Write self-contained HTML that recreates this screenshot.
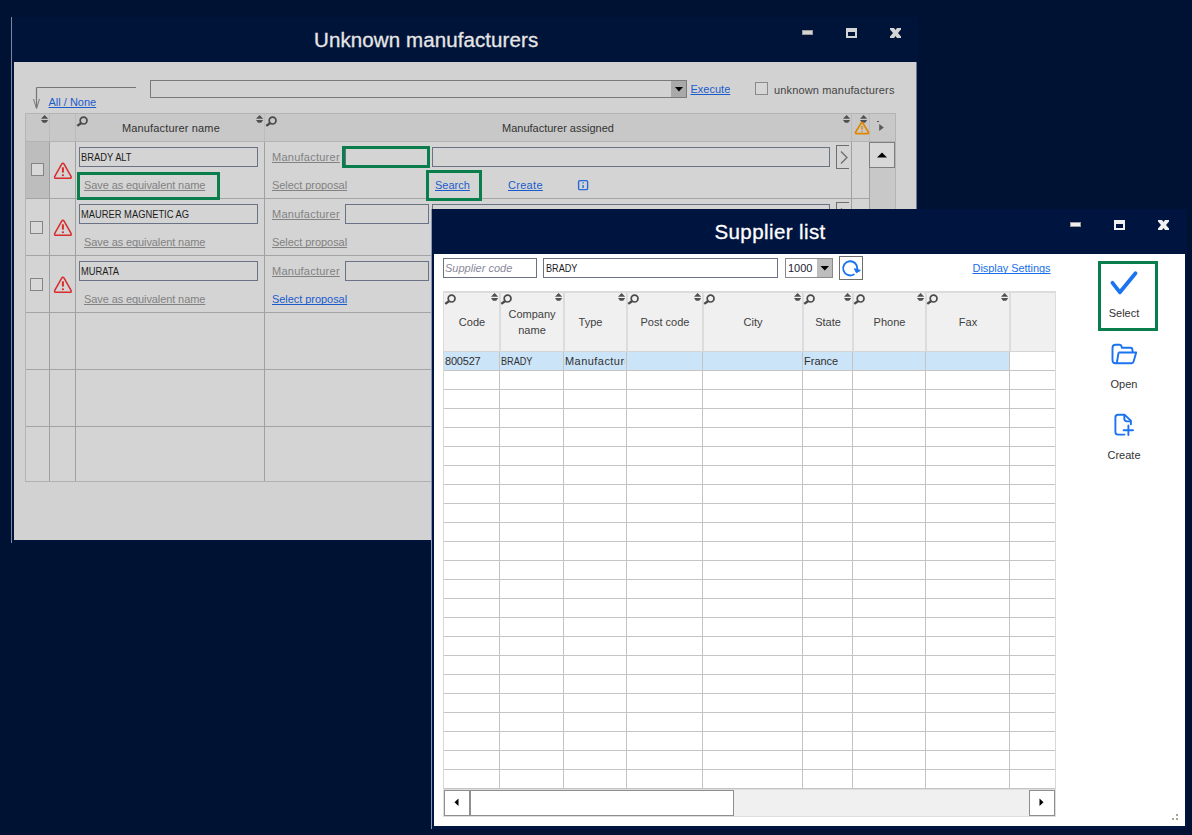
<!DOCTYPE html>
<html><head><meta charset="utf-8"><title>Unknown manufacturers</title>
<style>
html,body{margin:0;padding:0;}
body{width:1192px;height:835px;overflow:hidden;position:relative;background:#001234;font-family:"Liberation Sans", sans-serif;}
svg{overflow:visible}
div{text-decoration-skip-ink:none}
</style></head><body>
<div style="position:absolute;left:12px;top:17px;width:906px;height:525px;background:#001439"></div>
<div style="position:absolute;left:11px;top:17px;width:1px;height:526px;background:#7c88a4"></div>
<div style="position:absolute;left:314px;top:27.40px;font-size:20.5px;line-height:25px;color:#e6e6e6;white-space:pre;letter-spacing:0.1px;-webkit-text-stroke:0.3px #e6e6e6">Unknown manufacturers</div>
<div style="position:absolute;left:802px;top:30px;width:11px;height:5px;background:#d4d4d4;box-shadow:inset 0 0 0 1px #9a9a9a"></div>
<div style="position:absolute;left:846px;top:28px;width:11px;height:10px;box-sizing:border-box;border:2px solid #d4d4d4;border-top-width:4px"></div>
<svg style="position:absolute;left:890px;top:28px" width="11" height="10" viewBox="0 0 11 10"><path d="M0 0 H4 L5.5 2 L7 0 H11 V1.5 L8 5 L11 8.5 V10 H7 L5.5 8 L4 10 H0 V8.5 L3 5 L0 1.5 Z" fill="#d4d4d4"/></svg>
<div style="position:absolute;left:14px;top:62px;width:902px;height:478px;background:#d2d2d2"></div>
<div style="position:absolute;left:916px;top:62px;width:1px;height:478px;background:#6c7790"></div>
<svg style="position:absolute;left:30px;top:84px" width="110" height="28" viewBox="0 0 110 28"><path d="M6.5 3.5 H106 M6.5 3.5 V24" stroke="#767676" stroke-width="1.2" fill="none"/><path d="M3.5 15 L6.5 24.5 L9.5 15" stroke="#767676" stroke-width="1" fill="none"/></svg>
<div style="position:absolute;left:48.5px;top:95.69px;font-size:11px;line-height:13px;color:#1a5ccc;white-space:pre;text-decoration:underline">All / None</div>
<div style="position:absolute;left:150px;top:80px;width:537px;height:18px;box-sizing:border-box;border:1px solid #7a7a7a;background:#d2d2d2"></div>
<div style="position:absolute;left:671px;top:81px;width:15px;height:16px;background:#a9a9a9"></div>
<svg style="position:absolute;left:674px;top:85px" width="10" height="8" viewBox="0 0 10 8"><path d="M1 2 H9 L5 6.5 Z" fill="#000"/></svg>
<div style="position:absolute;left:690.5px;top:82.69px;font-size:11px;line-height:13px;color:#1a5ccc;white-space:pre;text-decoration:underline">Execute</div>
<div style="position:absolute;left:755px;top:82px;width:13px;height:13px;box-sizing:border-box;border:1px solid #8a8a8a;background:#d6d6d6"></div>
<div style="position:absolute;left:774px;top:83.69px;font-size:11px;line-height:13px;color:#444444;white-space:pre;letter-spacing:0.15px">unknown manufacturers</div>
<div style="position:absolute;left:25px;top:113px;width:871px;height:369px;box-sizing:border-box;border:1px solid #b4b4b4;background:#d4d4d4"></div>
<div style="position:absolute;left:26px;top:114px;width:869px;height:27px;background:#c8c8c8"></div>
<div style="position:absolute;left:25px;top:141px;width:871px;height:1px;background:#b4b4b4"></div>
<div style="position:absolute;left:26px;top:142px;width:23px;height:56px;background:#bdbdbd"></div>
<div style="position:absolute;left:869px;top:142px;width:26px;height:340px;background:#c8c8c8"></div>
<div style="position:absolute;left:49px;top:114px;width:1px;height:27px;background:#bcbcbc"></div>
<div style="position:absolute;left:75px;top:114px;width:1px;height:27px;background:#bcbcbc"></div>
<div style="position:absolute;left:264px;top:114px;width:1px;height:27px;background:#bcbcbc"></div>
<div style="position:absolute;left:851px;top:114px;width:1px;height:27px;background:#bcbcbc"></div>
<div style="position:absolute;left:869px;top:114px;width:1px;height:27px;background:#bcbcbc"></div>
<div style="position:absolute;left:49px;top:142px;width:1px;height:339px;background:#a0a0a0"></div>
<div style="position:absolute;left:75px;top:142px;width:1px;height:339px;background:#a0a0a0"></div>
<div style="position:absolute;left:264px;top:142px;width:1px;height:339px;background:#a0a0a0"></div>
<div style="position:absolute;left:851px;top:142px;width:1px;height:339px;background:#a0a0a0"></div>
<div style="position:absolute;left:869px;top:142px;width:1px;height:339px;background:#a0a0a0"></div>
<div style="position:absolute;left:26px;top:198px;width:843px;height:1px;background:#a4a4a4"></div>
<div style="position:absolute;left:26px;top:255px;width:843px;height:1px;background:#a4a4a4"></div>
<div style="position:absolute;left:26px;top:312px;width:843px;height:1px;background:#a4a4a4"></div>
<div style="position:absolute;left:26px;top:369px;width:843px;height:1px;background:#a4a4a4"></div>
<div style="position:absolute;left:26px;top:426px;width:843px;height:1px;background:#a4a4a4"></div>
<div style="position:absolute;left:26px;top:481px;width:869px;height:1px;background:#b0b0b0"></div>
<svg style="position:absolute;left:40px;top:113px" width="9" height="11" viewBox="0 0 9 11"><path d="M1 5.8 L4.6 2 L8.2 5.8 Z M1 7 H8.2 L6.2 9.8 H3 Z" fill="#505050"/></svg>
<svg style="position:absolute;left:75px;top:113px" width="14" height="14" viewBox="0 0 14 14"><circle cx="8.6" cy="7.6" r="3.4" stroke="#4a4a4a" stroke-width="1.7" fill="none"/><path d="M6.2 10 L2.3 12.9" stroke="#4a4a4a" stroke-width="2.4"/></svg>
<div style="position:absolute;left:122px;top:121.69px;font-size:11px;line-height:13px;color:#333333;white-space:pre;letter-spacing:0.15px">Manufacturer name</div>
<svg style="position:absolute;left:255px;top:113px" width="9" height="11" viewBox="0 0 9 11"><path d="M1 5.8 L4.6 2 L8.2 5.8 Z M1 7 H8.2 L6.2 9.8 H3 Z" fill="#505050"/></svg>
<svg style="position:absolute;left:264px;top:113px" width="14" height="14" viewBox="0 0 14 14"><circle cx="8.6" cy="7.6" r="3.4" stroke="#4a4a4a" stroke-width="1.7" fill="none"/><path d="M6.2 10 L2.3 12.9" stroke="#4a4a4a" stroke-width="2.4"/></svg>
<div style="position:absolute;left:502px;top:121.69px;font-size:11px;line-height:13px;color:#333333;white-space:pre;">Manufacturer assigned</div>
<svg style="position:absolute;left:842px;top:113px" width="9" height="11" viewBox="0 0 9 11"><path d="M1 5.8 L4.6 2 L8.2 5.8 Z M1 7 H8.2 L6.2 9.8 H3 Z" fill="#505050"/></svg>
<svg style="position:absolute;left:859px;top:113px" width="9" height="11" viewBox="0 0 9 11"><path d="M1 5.8 L4.6 2 L8.2 5.8 Z M1 7 H8.2 L6.2 9.8 H3 Z" fill="#505050"/></svg>
<svg style="position:absolute;left:853px;top:120px" width="18" height="16" viewBox="0 0 18 16"><path d="M8.1 3.3 Q9 1.8 9.9 3.3 L15.3 12 Q16.2 13.6 14.4 13.6 H3.6 Q1.8 13.6 2.7 12 Z" stroke="#e08600" stroke-width="1.7" fill="none" stroke-linejoin="round"/><path d="M9 6 V9.8" stroke="#e08600" stroke-width="1.4"/><circle cx="9" cy="11.6" r="0.75" fill="#e08600"/></svg>
<svg style="position:absolute;left:875px;top:119px" width="12" height="14" viewBox="0 0 12 14"><path d="M2 2.5 H4" stroke="#555" stroke-width="1"/><path d="M4.2 5 L8.8 8.5 L4.2 12 Z" fill="#5a5a5a"/></svg>
<div style="position:absolute;left:869px;top:142px;width:26px;height:26px;box-sizing:border-box;border:1px solid #7e7e7e;background:#d8d8d8"></div>
<svg style="position:absolute;left:876px;top:151px" width="12" height="8" viewBox="0 0 12 8"><path d="M1 6.5 H11 L6 1.5 Z" fill="#000"/></svg>
<div style="position:absolute;left:31px;top:163px;width:13px;height:13px;box-sizing:border-box;border:1.5px solid #858585;background:#d8d8d8"></div>
<svg style="position:absolute;left:53px;top:160px" width="20" height="21" viewBox="0 0 20 21"><path d="M8.7 4.2 Q9.9 2.2 11.1 4.2 L17.9 16.2 Q19 18.3 16.7 18.3 H3.1 Q0.8 18.3 1.9 16.2 Z" stroke="#d92b2b" stroke-width="1.5" fill="none" stroke-linejoin="round"/><path d="M9.9 7.3 V12.6" stroke="#d92b2b" stroke-width="2"/><rect x="8.9" y="14.4" width="2" height="1.7" fill="#d92b2b"/></svg>
<div style="position:absolute;left:79px;top:147px;width:179px;height:20px;box-sizing:border-box;border:1px solid #6a7386"></div>
<div style="position:absolute;left:80.8px;top:150.69px;font-size:11px;line-height:13px;color:#1c1c1c;white-space:pre;transform:scaleX(0.85);transform-origin:0 0;">BRADY ALT</div>
<div style="position:absolute;left:84px;top:178.69px;font-size:11px;line-height:13px;color:#828282;white-space:pre;text-decoration:underline;letter-spacing:-0.1px">Save as equivalent name</div>
<div style="position:absolute;left:272px;top:150.69px;font-size:11px;line-height:13px;color:#828282;white-space:pre;text-decoration:underline;letter-spacing:0.25px">Manufacturer</div>
<div style="position:absolute;left:345px;top:147px;width:84px;height:20px;box-sizing:border-box;border:1px solid #6a7386"></div>
<div style="position:absolute;left:432px;top:147px;width:398px;height:20px;box-sizing:border-box;border:1px solid #6a7386"></div>
<div style="position:absolute;left:836px;top:145px;width:13px;height:24px;box-sizing:border-box;border:1.3px solid #6e6e6e;border-right:none"></div>
<svg style="position:absolute;left:838px;top:150px" width="12" height="16" viewBox="0 0 12 16"><path d="M3 1.5 L9 7.5 L3 13.5" stroke="#6e6e6e" stroke-width="1.3" fill="none"/></svg>
<div style="position:absolute;left:272px;top:178.69px;font-size:11px;line-height:13px;color:#828282;white-space:pre;text-decoration:underline;letter-spacing:-0.05px">Select proposal</div>
<div style="position:absolute;left:30px;top:221px;width:13px;height:13px;box-sizing:border-box;border:1.5px solid #858585;background:#d8d8d8"></div>
<svg style="position:absolute;left:53px;top:217px" width="20" height="21" viewBox="0 0 20 21"><path d="M8.7 4.2 Q9.9 2.2 11.1 4.2 L17.9 16.2 Q19 18.3 16.7 18.3 H3.1 Q0.8 18.3 1.9 16.2 Z" stroke="#d92b2b" stroke-width="1.5" fill="none" stroke-linejoin="round"/><path d="M9.9 7.3 V12.6" stroke="#d92b2b" stroke-width="2"/><rect x="8.9" y="14.4" width="2" height="1.7" fill="#d92b2b"/></svg>
<div style="position:absolute;left:79px;top:204px;width:179px;height:20px;box-sizing:border-box;border:1px solid #6a7386"></div>
<div style="position:absolute;left:80.8px;top:207.69px;font-size:11px;line-height:13px;color:#1c1c1c;white-space:pre;transform:scaleX(0.85);transform-origin:0 0;">MAURER MAGNETIC AG</div>
<div style="position:absolute;left:84px;top:235.69px;font-size:11px;line-height:13px;color:#828282;white-space:pre;text-decoration:underline;letter-spacing:-0.1px">Save as equivalent name</div>
<div style="position:absolute;left:272px;top:207.69px;font-size:11px;line-height:13px;color:#828282;white-space:pre;text-decoration:underline;letter-spacing:0.25px">Manufacturer</div>
<div style="position:absolute;left:345px;top:204px;width:84px;height:20px;box-sizing:border-box;border:1px solid #6a7386"></div>
<div style="position:absolute;left:432px;top:204px;width:398px;height:20px;box-sizing:border-box;border:1px solid #6a7386"></div>
<div style="position:absolute;left:836px;top:202px;width:13px;height:24px;box-sizing:border-box;border:1.3px solid #6e6e6e;border-right:none"></div>
<svg style="position:absolute;left:838px;top:207px" width="12" height="16" viewBox="0 0 12 16"><path d="M3 1.5 L9 7.5 L3 13.5" stroke="#6e6e6e" stroke-width="1.3" fill="none"/></svg>
<div style="position:absolute;left:272px;top:235.69px;font-size:11px;line-height:13px;color:#828282;white-space:pre;text-decoration:underline;letter-spacing:-0.05px">Select proposal</div>
<div style="position:absolute;left:30px;top:278px;width:13px;height:13px;box-sizing:border-box;border:1.5px solid #858585;background:#d8d8d8"></div>
<svg style="position:absolute;left:53px;top:274px" width="20" height="21" viewBox="0 0 20 21"><path d="M8.7 4.2 Q9.9 2.2 11.1 4.2 L17.9 16.2 Q19 18.3 16.7 18.3 H3.1 Q0.8 18.3 1.9 16.2 Z" stroke="#d92b2b" stroke-width="1.5" fill="none" stroke-linejoin="round"/><path d="M9.9 7.3 V12.6" stroke="#d92b2b" stroke-width="2"/><rect x="8.9" y="14.4" width="2" height="1.7" fill="#d92b2b"/></svg>
<div style="position:absolute;left:79px;top:261px;width:179px;height:20px;box-sizing:border-box;border:1px solid #6a7386"></div>
<div style="position:absolute;left:80.8px;top:264.69px;font-size:11px;line-height:13px;color:#1c1c1c;white-space:pre;transform:scaleX(0.85);transform-origin:0 0;">MURATA</div>
<div style="position:absolute;left:84px;top:292.69px;font-size:11px;line-height:13px;color:#828282;white-space:pre;text-decoration:underline;letter-spacing:-0.1px">Save as equivalent name</div>
<div style="position:absolute;left:272px;top:264.69px;font-size:11px;line-height:13px;color:#828282;white-space:pre;text-decoration:underline;letter-spacing:0.25px">Manufacturer</div>
<div style="position:absolute;left:345px;top:261px;width:84px;height:20px;box-sizing:border-box;border:1px solid #6a7386"></div>
<div style="position:absolute;left:432px;top:261px;width:398px;height:20px;box-sizing:border-box;border:1px solid #6a7386"></div>
<div style="position:absolute;left:836px;top:259px;width:13px;height:24px;box-sizing:border-box;border:1.3px solid #6e6e6e;border-right:none"></div>
<svg style="position:absolute;left:838px;top:264px" width="12" height="16" viewBox="0 0 12 16"><path d="M3 1.5 L9 7.5 L3 13.5" stroke="#6e6e6e" stroke-width="1.3" fill="none"/></svg>
<div style="position:absolute;left:272px;top:292.69px;font-size:11px;line-height:13px;color:#1a5ccc;white-space:pre;text-decoration:underline;letter-spacing:-0.05px">Select proposal</div>
<div style="position:absolute;left:435px;top:178.69px;font-size:11px;line-height:13px;color:#1a5ccc;white-space:pre;text-decoration:underline">Search</div>
<div style="position:absolute;left:508px;top:178.69px;font-size:11px;line-height:13px;color:#1a5ccc;white-space:pre;text-decoration:underline;letter-spacing:0.3px">Create</div>
<svg style="position:absolute;left:577px;top:179px" width="12" height="12" viewBox="0 0 12 12"><rect x="1.6" y="1.6" width="9" height="9" rx="1.2" stroke="#2a6ad8" stroke-width="1.4" fill="none"/><path d="M6.1 3.3 V4.5 M6.1 5.9 V9" stroke="#2a6ad8" stroke-width="1.4"/></svg>
<div style="position:absolute;left:77px;top:172px;width:143px;height:28px;box-sizing:border-box;border:3px solid #0a7d4c"></div>
<div style="position:absolute;left:342px;top:146px;width:88px;height:22px;box-sizing:border-box;border:3px solid #0a7d4c"></div>
<div style="position:absolute;left:426px;top:170px;width:56px;height:31px;box-sizing:border-box;border:3px solid #0a7d4c"></div>
<div style="position:absolute;left:432px;top:209px;width:755px;height:620px;background:#001440"></div>
<div style="position:absolute;left:431px;top:209px;width:1px;height:620px;background:#8a96b4"></div>
<div style="position:absolute;left:714.5px;top:219.40px;font-size:20.5px;line-height:25px;color:#ffffff;white-space:pre;letter-spacing:0.4px;-webkit-text-stroke:0.3px #ffffff">Supplier list</div>
<div style="position:absolute;left:1070px;top:222px;width:11px;height:5px;background:#f0f0f0;box-shadow:inset 0 0 0 1px #9a9a9a"></div>
<div style="position:absolute;left:1114px;top:220px;width:11px;height:10px;box-sizing:border-box;border:2px solid #f0f0f0;border-top-width:4px"></div>
<svg style="position:absolute;left:1158px;top:220px" width="11" height="10" viewBox="0 0 11 10"><path d="M0 0 H4 L5.5 2 L7 0 H11 V1.5 L8 5 L11 8.5 V10 H7 L5.5 8 L4 10 H0 V8.5 L3 5 L0 1.5 Z" fill="#f0f0f0"/></svg>
<div style="position:absolute;left:434px;top:254px;width:751px;height:572px;background:#ffffff"></div>
<div style="position:absolute;left:443px;top:258px;width:94px;height:20px;box-sizing:border-box;border:1px solid #6a7386"></div>
<div style="position:absolute;left:445px;top:261.69px;font-size:11px;line-height:13px;color:#8a8a9a;white-space:pre;font-style:italic">Supplier code</div>
<div style="position:absolute;left:543px;top:258px;width:235px;height:20px;box-sizing:border-box;border:1px solid #6a7386"></div>
<div style="position:absolute;left:545.5px;top:261.69px;font-size:11px;line-height:13px;color:#1c1c1c;white-space:pre;transform:scaleX(0.83);transform-origin:0 0">BRADY</div>
<div style="position:absolute;left:785px;top:258px;width:48px;height:20px;box-sizing:border-box;border:1px solid #8a8a8a"></div>
<div style="position:absolute;left:817px;top:259px;width:15px;height:18px;background:#bdbdbd"></div>
<div style="position:absolute;left:788px;top:261.69px;font-size:11px;line-height:13px;color:#1c1c30;white-space:pre;">1000</div>
<svg style="position:absolute;left:819px;top:264px" width="12" height="8" viewBox="0 0 12 8"><path d="M1.5 2 H10 L5.75 6.5 Z" fill="#000"/></svg>
<div style="position:absolute;left:839px;top:256px;width:24px;height:24px;box-sizing:border-box;border:1px solid #6e6e6e"></div>
<svg style="position:absolute;left:839px;top:256px" width="24" height="24" viewBox="0 0 24 24"><path d="M14.75 18.45 A7.1 7.1 0 1 1 18.3 12.9" stroke="#1a73f0" stroke-width="1.9" fill="none" stroke-linecap="round"/><path d="M15.4 12.7 L21.4 14.4 L17.4 16.8 Z" fill="#1a73f0" stroke="#1a73f0" stroke-width="1" stroke-linejoin="round"/></svg>
<div style="position:absolute;left:972.5px;top:261.69px;font-size:11px;line-height:13px;color:#1a6fe8;white-space:pre;text-decoration:underline;letter-spacing:-0.05px">Display Settings</div>
<div style="position:absolute;left:443px;top:291px;width:613px;height:61px;background:#f0f0f0;box-sizing:border-box;border:1px solid #dcdcdc;border-top:2px solid #dcdcdc;border-bottom:1px solid #d4d4d4"></div>
<div style="position:absolute;left:444px;top:352px;width:565px;height:18px;background:#cce4f8"></div>
<div style="position:absolute;left:499px;top:292px;width:2px;height:59px;background:#dcdcdc"></div>
<div style="position:absolute;left:563px;top:292px;width:2px;height:59px;background:#dcdcdc"></div>
<div style="position:absolute;left:626px;top:292px;width:2px;height:59px;background:#dcdcdc"></div>
<div style="position:absolute;left:702px;top:292px;width:2px;height:59px;background:#dcdcdc"></div>
<div style="position:absolute;left:802px;top:292px;width:2px;height:59px;background:#dcdcdc"></div>
<div style="position:absolute;left:852px;top:292px;width:2px;height:59px;background:#dcdcdc"></div>
<div style="position:absolute;left:925px;top:292px;width:2px;height:59px;background:#dcdcdc"></div>
<div style="position:absolute;left:1009px;top:292px;width:2px;height:59px;background:#dcdcdc"></div>
<div style="position:absolute;left:443px;top:352px;width:1px;height:437px;background:#d8d8d8"></div>
<div style="position:absolute;left:499px;top:352px;width:1px;height:437px;background:#c4c4c4"></div>
<div style="position:absolute;left:563px;top:352px;width:1px;height:437px;background:#c4c4c4"></div>
<div style="position:absolute;left:626px;top:352px;width:1px;height:437px;background:#c4c4c4"></div>
<div style="position:absolute;left:702px;top:352px;width:1px;height:437px;background:#c4c4c4"></div>
<div style="position:absolute;left:802px;top:352px;width:1px;height:437px;background:#c4c4c4"></div>
<div style="position:absolute;left:852px;top:352px;width:1px;height:437px;background:#c4c4c4"></div>
<div style="position:absolute;left:925px;top:352px;width:1px;height:437px;background:#c4c4c4"></div>
<div style="position:absolute;left:1009px;top:352px;width:1px;height:437px;background:#c4c4c4"></div>
<div style="position:absolute;left:1055px;top:352px;width:1px;height:437px;background:#d8d8d8"></div>
<div style="position:absolute;left:444px;top:370px;width:611px;height:1px;background:#c4c4c4"></div>
<div style="position:absolute;left:444px;top:389px;width:611px;height:1px;background:#c4c4c4"></div>
<div style="position:absolute;left:444px;top:408px;width:611px;height:1px;background:#c4c4c4"></div>
<div style="position:absolute;left:444px;top:427px;width:611px;height:1px;background:#c4c4c4"></div>
<div style="position:absolute;left:444px;top:446px;width:611px;height:1px;background:#c4c4c4"></div>
<div style="position:absolute;left:444px;top:465px;width:611px;height:1px;background:#c4c4c4"></div>
<div style="position:absolute;left:444px;top:484px;width:611px;height:1px;background:#c4c4c4"></div>
<div style="position:absolute;left:444px;top:503px;width:611px;height:1px;background:#c4c4c4"></div>
<div style="position:absolute;left:444px;top:522px;width:611px;height:1px;background:#c4c4c4"></div>
<div style="position:absolute;left:444px;top:541px;width:611px;height:1px;background:#c4c4c4"></div>
<div style="position:absolute;left:444px;top:560px;width:611px;height:1px;background:#c4c4c4"></div>
<div style="position:absolute;left:444px;top:579px;width:611px;height:1px;background:#c4c4c4"></div>
<div style="position:absolute;left:444px;top:598px;width:611px;height:1px;background:#c4c4c4"></div>
<div style="position:absolute;left:444px;top:617px;width:611px;height:1px;background:#c4c4c4"></div>
<div style="position:absolute;left:444px;top:636px;width:611px;height:1px;background:#c4c4c4"></div>
<div style="position:absolute;left:444px;top:655px;width:611px;height:1px;background:#c4c4c4"></div>
<div style="position:absolute;left:444px;top:674px;width:611px;height:1px;background:#c4c4c4"></div>
<div style="position:absolute;left:444px;top:693px;width:611px;height:1px;background:#c4c4c4"></div>
<div style="position:absolute;left:444px;top:712px;width:611px;height:1px;background:#c4c4c4"></div>
<div style="position:absolute;left:444px;top:731px;width:611px;height:1px;background:#c4c4c4"></div>
<div style="position:absolute;left:444px;top:750px;width:611px;height:1px;background:#c4c4c4"></div>
<div style="position:absolute;left:444px;top:769px;width:611px;height:1px;background:#c4c4c4"></div>
<div style="position:absolute;left:444px;top:788px;width:611px;height:1px;background:#c4c4c4"></div>
<div style="position:absolute;left:372.0px;top:315.69px;width:200px;text-align:center;font-size:11px;line-height:13px;color:#404040;white-space:pre;">Code</div>
<svg style="position:absolute;left:443px;top:291px" width="14" height="14" viewBox="0 0 14 14"><circle cx="8.6" cy="7.6" r="3.4" stroke="#4a4a4a" stroke-width="1.7" fill="none"/><path d="M6.2 10 L2.3 12.9" stroke="#4a4a4a" stroke-width="2.4"/></svg>
<svg style="position:absolute;left:490px;top:291px" width="9" height="11" viewBox="0 0 9 11"><path d="M1 5.8 L4.6 2 L8.2 5.8 Z M1 7 H8.2 L6.2 9.8 H3 Z" fill="#505050"/></svg>
<div style="position:absolute;left:432.0px;top:307.69px;width:200px;text-align:center;font-size:11px;line-height:13px;color:#404040;white-space:pre;">Company</div>
<div style="position:absolute;left:432.0px;top:323.69px;width:200px;text-align:center;font-size:11px;line-height:13px;color:#404040;white-space:pre;">name</div>
<svg style="position:absolute;left:499px;top:291px" width="14" height="14" viewBox="0 0 14 14"><circle cx="8.6" cy="7.6" r="3.4" stroke="#4a4a4a" stroke-width="1.7" fill="none"/><path d="M6.2 10 L2.3 12.9" stroke="#4a4a4a" stroke-width="2.4"/></svg>
<svg style="position:absolute;left:554px;top:291px" width="9" height="11" viewBox="0 0 9 11"><path d="M1 5.8 L4.6 2 L8.2 5.8 Z M1 7 H8.2 L6.2 9.8 H3 Z" fill="#505050"/></svg>
<div style="position:absolute;left:490.5px;top:315.69px;width:200px;text-align:center;font-size:11px;line-height:13px;color:#404040;white-space:pre;">Type</div>
<svg style="position:absolute;left:617px;top:291px" width="9" height="11" viewBox="0 0 9 11"><path d="M1 5.8 L4.6 2 L8.2 5.8 Z M1 7 H8.2 L6.2 9.8 H3 Z" fill="#505050"/></svg>
<div style="position:absolute;left:565.0px;top:315.69px;width:200px;text-align:center;font-size:11px;line-height:13px;color:#404040;white-space:pre;">Post code</div>
<svg style="position:absolute;left:626px;top:291px" width="14" height="14" viewBox="0 0 14 14"><circle cx="8.6" cy="7.6" r="3.4" stroke="#4a4a4a" stroke-width="1.7" fill="none"/><path d="M6.2 10 L2.3 12.9" stroke="#4a4a4a" stroke-width="2.4"/></svg>
<svg style="position:absolute;left:693px;top:291px" width="9" height="11" viewBox="0 0 9 11"><path d="M1 5.8 L4.6 2 L8.2 5.8 Z M1 7 H8.2 L6.2 9.8 H3 Z" fill="#505050"/></svg>
<div style="position:absolute;left:653.0px;top:315.69px;width:200px;text-align:center;font-size:11px;line-height:13px;color:#404040;white-space:pre;">City</div>
<svg style="position:absolute;left:702px;top:291px" width="14" height="14" viewBox="0 0 14 14"><circle cx="8.6" cy="7.6" r="3.4" stroke="#4a4a4a" stroke-width="1.7" fill="none"/><path d="M6.2 10 L2.3 12.9" stroke="#4a4a4a" stroke-width="2.4"/></svg>
<svg style="position:absolute;left:793px;top:291px" width="9" height="11" viewBox="0 0 9 11"><path d="M1 5.8 L4.6 2 L8.2 5.8 Z M1 7 H8.2 L6.2 9.8 H3 Z" fill="#505050"/></svg>
<div style="position:absolute;left:728.0px;top:315.69px;width:200px;text-align:center;font-size:11px;line-height:13px;color:#404040;white-space:pre;">State</div>
<svg style="position:absolute;left:802px;top:291px" width="14" height="14" viewBox="0 0 14 14"><circle cx="8.6" cy="7.6" r="3.4" stroke="#4a4a4a" stroke-width="1.7" fill="none"/><path d="M6.2 10 L2.3 12.9" stroke="#4a4a4a" stroke-width="2.4"/></svg>
<svg style="position:absolute;left:843px;top:291px" width="9" height="11" viewBox="0 0 9 11"><path d="M1 5.8 L4.6 2 L8.2 5.8 Z M1 7 H8.2 L6.2 9.8 H3 Z" fill="#505050"/></svg>
<div style="position:absolute;left:789.5px;top:315.69px;width:200px;text-align:center;font-size:11px;line-height:13px;color:#404040;white-space:pre;">Phone</div>
<svg style="position:absolute;left:852px;top:291px" width="14" height="14" viewBox="0 0 14 14"><circle cx="8.6" cy="7.6" r="3.4" stroke="#4a4a4a" stroke-width="1.7" fill="none"/><path d="M6.2 10 L2.3 12.9" stroke="#4a4a4a" stroke-width="2.4"/></svg>
<svg style="position:absolute;left:916px;top:291px" width="9" height="11" viewBox="0 0 9 11"><path d="M1 5.8 L4.6 2 L8.2 5.8 Z M1 7 H8.2 L6.2 9.8 H3 Z" fill="#505050"/></svg>
<div style="position:absolute;left:868.0px;top:315.69px;width:200px;text-align:center;font-size:11px;line-height:13px;color:#404040;white-space:pre;">Fax</div>
<svg style="position:absolute;left:925px;top:291px" width="14" height="14" viewBox="0 0 14 14"><circle cx="8.6" cy="7.6" r="3.4" stroke="#4a4a4a" stroke-width="1.7" fill="none"/><path d="M6.2 10 L2.3 12.9" stroke="#4a4a4a" stroke-width="2.4"/></svg>
<svg style="position:absolute;left:1000px;top:291px" width="9" height="11" viewBox="0 0 9 11"><path d="M1 5.8 L4.6 2 L8.2 5.8 Z M1 7 H8.2 L6.2 9.8 H3 Z" fill="#505050"/></svg>
<div style="position:absolute;left:445px;top:354.69px;font-size:11px;line-height:13px;color:#303030;white-space:pre;letter-spacing:-0.2px">800527</div>
<div style="position:absolute;left:501px;top:354.69px;font-size:11px;line-height:13px;color:#303030;white-space:pre;transform:scaleX(0.83);transform-origin:0 0">BRADY</div>
<div style="position:absolute;left:565px;top:352px;width:60px;height:18px;overflow:hidden">
<div style="position:absolute;left:0px;top:2.69px;font-size:11px;line-height:13px;color:#303030;white-space:pre;letter-spacing:0.45px">Manufacturer</div>
</div>
<div style="position:absolute;left:804px;top:354.69px;font-size:11px;line-height:13px;color:#303030;white-space:pre;">France</div>
<div style="position:absolute;left:443px;top:789px;width:613px;height:28px;background:#f0f0f0;box-sizing:border-box;border:1px solid #dedede"></div>
<div style="position:absolute;left:444px;top:790px;width:26px;height:26px;box-sizing:border-box;border:1.5px solid #8e8e8e;background:#fff"></div>
<svg style="position:absolute;left:452px;top:797px" width="8" height="10" viewBox="0 0 8 10"><path d="M6.5 1.5 V9 L2.5 5.25 Z" fill="#000"/></svg>
<div style="position:absolute;left:470px;top:790px;width:264px;height:26px;box-sizing:border-box;border:1.5px solid #8e8e8e;background:#fff"></div>
<div style="position:absolute;left:1029px;top:790px;width:26px;height:26px;box-sizing:border-box;border:1.5px solid #8e8e8e;background:#fff"></div>
<svg style="position:absolute;left:1037px;top:797px" width="8" height="10" viewBox="0 0 8 10"><path d="M2.5 1.5 V9 L6.5 5.25 Z" fill="#000"/></svg>
<div style="position:absolute;left:1098px;top:261px;width:60px;height:70px;box-sizing:border-box;border:3px solid #0a7d4c"></div>
<svg style="position:absolute;left:1104px;top:266px" width="40" height="32" viewBox="0 0 40 32"><path d="M8.5 16.8 L15.9 26.3 L31.5 7.2" stroke="#1a73f0" stroke-width="3.8" fill="none" stroke-linecap="round" stroke-linejoin="round"/></svg>
<div style="position:absolute;left:1094.0px;top:306.69px;width:60px;text-align:center;font-size:11px;line-height:13px;color:#333333;white-space:pre;">Select</div>
<svg style="position:absolute;left:1106px;top:338px" width="36" height="30" viewBox="0 0 36 30"><path d="M6.5 22 V10 Q6.5 6.8 9.6 6.8 H13.6 Q15 6.8 15.4 8.2 L16 9.8 H24.3 Q26.5 9.8 26.5 12.2 V14.5" stroke="#1a73f0" stroke-width="1.9" fill="none" stroke-linejoin="round"/><path d="M12.6 14.5 H30.2 L27.6 23.6 Q27.2 25.2 25.6 25.2 H9.2 Q6.5 25.2 6.5 22 M12.6 14.5 L10.8 25" stroke="#1a73f0" stroke-width="1.9" fill="none" stroke-linejoin="round"/></svg>
<div style="position:absolute;left:1094.0px;top:377.69px;width:60px;text-align:center;font-size:11px;line-height:13px;color:#333333;white-space:pre;">Open</div>
<svg style="position:absolute;left:1108px;top:410px" width="32" height="30" viewBox="0 0 32 30"><path d="M16.4 24.6 H10 Q7.4 24.6 7.4 22 V7.4 Q7.4 4.8 10 4.8 H16.5 L22.9 10.6 V14.2" stroke="#1a73f0" stroke-width="1.9" fill="none" stroke-linejoin="round" stroke-linecap="round"/><path d="M16.3 5 V8.6 Q16.3 11.4 19.3 11.4 H22.5" stroke="#1a73f0" stroke-width="1.9" fill="none"/><path d="M20.4 15.5 V25 M15.6 20.3 H25" stroke="#1a73f0" stroke-width="1.9" stroke-linecap="round"/></svg>
<div style="position:absolute;left:1094.0px;top:448.69px;width:60px;text-align:center;font-size:11px;line-height:13px;color:#333333;white-space:pre;">Create</div>
<div style="position:absolute;left:1176px;top:814px;width:2px;height:2px;background:#a8a690"></div>
<div style="position:absolute;left:1172px;top:818px;width:2px;height:2px;background:#a8a690"></div>
<div style="position:absolute;left:1176px;top:818px;width:2px;height:2px;background:#a8a690"></div>
</body></html>
